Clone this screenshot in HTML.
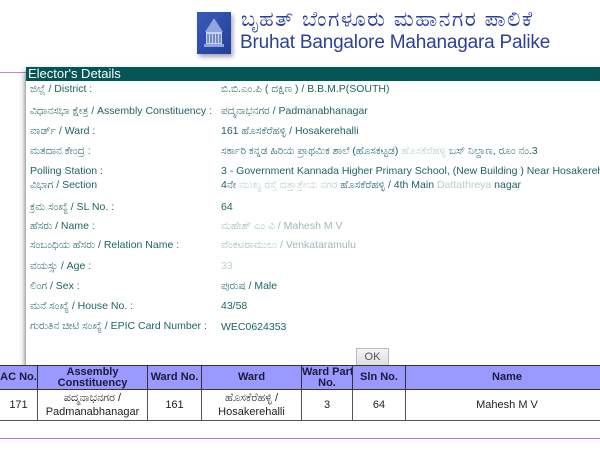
<!DOCTYPE html>
<html><head><meta charset="utf-8"><style>
body{margin:0;width:600px;height:450px;overflow:hidden;background:#fff;font-family:"Liberation Sans",sans-serif;position:relative}
.logo{position:absolute;left:197px;top:12px;width:34px;height:42px;background:linear-gradient(135deg,#3a5cb8,#1f3f9a);box-shadow:2px 3px 4px #aab}
.kt{position:absolute;left:241px;top:8px;font-size:21px;color:#2c3f9a;white-space:nowrap;letter-spacing:1.5px}
.et{position:absolute;left:240px;top:32px;font-size:19px;color:#2c3f9a;white-space:nowrap;letter-spacing:-0.2px}
.pl{position:absolute;left:0;top:72px;width:30px;height:1px;background:#b38ae0}
.dlg{position:absolute;left:26px;top:67px;width:580px;height:300px;background:#fff;box-shadow:0 4px 6px rgba(0,0,0,.7)}
.hd{height:14px;background:#045656;color:#fff;font-size:13px;line-height:14px;padding-left:2px}
.r{position:absolute;font-size:10.5px;color:#1e6464;white-space:nowrap}
.ok{position:absolute;left:330px;top:281px;width:31px;height:16px;border:1px solid #bbb;background:linear-gradient(#f4f4f4,#ddd);font-size:11px;color:#555;text-align:center;line-height:16px}
table{position:absolute;left:-1px;top:365px;border-collapse:collapse;font-size:11px;width:610px;table-layout:fixed}
th{background:#9999ff;color:#1a1a3a;border:1px solid #333;height:23px;line-height:11px;font-weight:bold;padding:0;white-space:nowrap;overflow:hidden}
td{border:1px solid #555;text-align:center;height:30px;color:#222;line-height:14px;padding:0}
.bl{position:absolute;left:0;top:438px;width:600px;height:1px;background:#b07ae0}
.f{color:#bcc}
</style></head><body>
<div class="logo"><svg width="34" height="42"><path d="M17 6 L8 20 L26 20 Z" fill="#8fa6e0"/><rect x="9" y="20" width="16" height="12" fill="#c8d4f0"/><path d="M11 22v9M14 22v9M17 22v9M20 22v9M23 22v9" stroke="#2c3f9a"/><rect x="7" y="32" width="20" height="3" fill="#8fa6e0"/></svg></div>
<div class="kt">ಬೃಹತ್ ಬೆಂಗಳೂರು ಮಹಾನಗರ ಪಾಲಿಕೆ</div>
<div class="et">Bruhat Bangalore Mahanagara Palike</div>
<div class="pl"></div>
<div class="dlg"><div class="hd">Elector's Details</div>
<div class="r" style="left:4px;top:16px">ಜಿಲ್ಲೆ / District :</div><div class="r" style="left:195px;top:16px">ಬಿ.ಬಿ.ಎಂ.ಪಿ ( ದಕ್ಷಿಣ ) / B.B.M.P(SOUTH)</div>
<div class="r" style="left:4px;top:38px">ವಿಧಾನಸಭಾ ಕ್ಷೇತ್ರ / Assembly Constituency :</div><div class="r" style="left:195px;top:38px">ಪದ್ಮನಾಭನಗರ / Padmanabhanagar</div>
<div class="r" style="left:4px;top:58px">ವಾರ್ಡ್ / Ward :</div><div class="r" style="left:195px;top:58px">161 ಹೊಸಕೆರೆಹಳ್ಳಿ / Hosakerehalli</div>
<div class="r" style="left:4px;top:78px">ಮತದಾನ ಕೇಂದ್ರ :</div><div class="r" style="left:195px;top:78px">ಸರ್ಕಾರಿ ಕನ್ನಡ ಹಿರಿಯ ಪ್ರಾಥಮಿಕ ಶಾಲೆ (ಹೊಸಕಟ್ಟಡ) <span class="f">ಹೊಸಕೆರೆಹಳ್ಳಿ</span> ಬಸ್ ನಿಲ್ದಾಣ, ರೂಂ ನಂ.3</div>
<div class="r" style="left:4px;top:98px">Polling Station :</div><div class="r" style="left:195px;top:98px">3 - Government Kannada Higher Primary School, (New Building ) Near Hosakerehalli</div>
<div class="r" style="left:4px;top:112px">ವಿಭಾಗ / Section</div><div class="r" style="left:195px;top:112px">4ನೇ <span class="f">ಮುಖ್ಯ ರಸ್ತೆ ದತ್ತಾತ್ರೇಯ ನಗರ</span> ಹೊಸಕೆರೆಹಳ್ಳಿ / 4th Main <span class="f">Dattathreya</span> nagar</div>
<div class="r" style="left:4px;top:134px">ಕ್ರಮ ಸಂಖ್ಯೆ / SL No. :</div><div class="r" style="left:195px;top:134px">64</div>
<div class="r" style="left:4px;top:153px">ಹೆಸರು / Name :</div><div class="r" style="left:195px;top:153px;opacity:.45">ಮಹೇಶ್ ಎಂ ವಿ / Mahesh M V</div>
<div class="r" style="left:4px;top:172px">ಸಂಬಂಧಿಯ ಹೆಸರು / Relation Name :</div><div class="r" style="left:195px;top:172px;opacity:.45">ವೆಂಕಟರಾಮುಲು / Venkataramulu</div>
<div class="r" style="left:4px;top:193px">ವಯಸ್ಸು / Age :</div><div class="r" style="left:195px;top:193px;opacity:.3">33</div>
<div class="r" style="left:4px;top:213px">ಲಿಂಗ / Sex :</div><div class="r" style="left:195px;top:213px">ಪುರುಷ / Male</div>
<div class="r" style="left:4px;top:233px">ಮನೆ ಸಂಖ್ಯೆ / House No. :</div><div class="r" style="left:195px;top:233px">43/58</div>
<div class="r" style="left:4px;top:253px">ಗುರುತಿನ ಚೀಟಿ ಸಂಖ್ಯೆ / EPIC Card Number :</div><div class="r" style="left:195px;top:254px">WEC0624353</div>
<div class="ok">OK</div>
</div>
<table><tr><th style="width:37px">AC No.</th><th style="width:109px">Assembly<br>Constituency</th><th style="width:53px">Ward No.</th><th style="width:99px">Ward</th><th style="width:50px">Ward Part<br>No.</th><th style="width:52px">Sln No.</th><th>Name</th></tr>
<tr><td>171</td><td>ಪದ್ಮನಾಭನಗರ /<br>Padmanabhanagar</td><td>161</td><td>ಹೊಸಕೆರೆಹಳ್ಳಿ /<br>Hosakerehalli</td><td>3</td><td>64</td><td>Mahesh M V</td></tr></table>
<div class="bl"></div>
</body></html>
